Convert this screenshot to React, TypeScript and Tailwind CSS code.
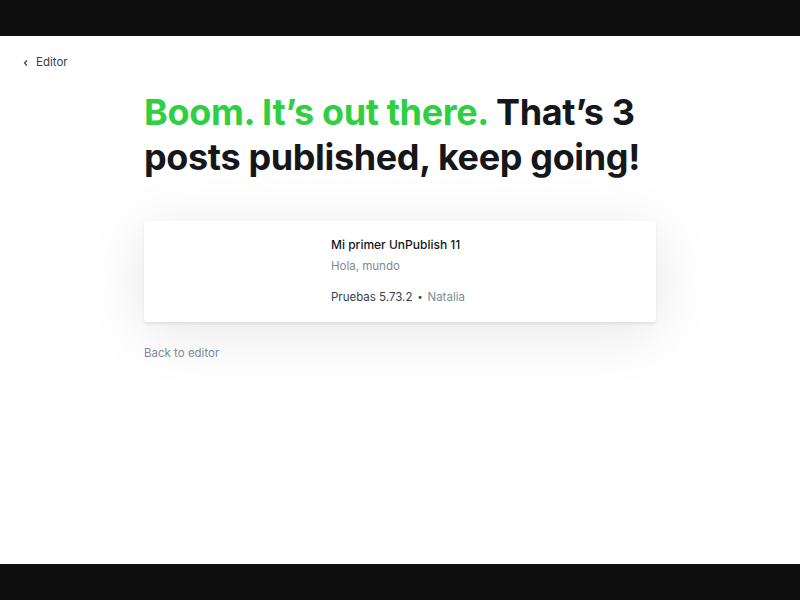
import React from "react";

export default function App() {
  return (
    <div className="w-[800px] h-[600px] bg-[#0f0f0f] flex flex-col" style={{ fontFamily: "Inter, 'Noto Sans', sans-serif" }}>
      <div className="h-[36px] shrink-0" />
      <div className="h-[528px] bg-white relative">
        <div className="absolute left-[22px] top-[18px] flex items-center gap-[6px] text-[11.5px] text-[#394047]">
          <svg width="8" height="8" viewBox="0 0 8 8" fill="none" stroke="#394047" strokeWidth="1.2">
            <path d="M5 1.5 L2.5 4 L5 6.5" />
          </svg>
          <span>Editor</span>
        </div>
        <div className="w-[512px] mx-auto pt-[54px]">
          <h1 className="text-[36px] leading-[45px] font-bold tracking-[-0.01em] text-[#15171a]">
            <span className="text-[#30cf43]">Boom. It’s out there.</span> That’s 3 posts published, keep going!
          </h1>
          <div className="mt-[41px] h-[101px] bg-white rounded-[3px] shadow-[0_2px_3px_rgba(0,0,0,0.08),0_10px_60px_rgba(0,0,0,0.1)] flex">
            <div className="w-[187px] shrink-0" />
            <div className="flex flex-col pt-[16px]">
              <div className="text-[12px] font-medium text-[#15171a] leading-[16px]">Mi primer UnPublish 11</div>
              <div className="text-[11.5px] text-[#7c8b9a] leading-[16px] mt-[5px]">Hola, mundo</div>
              <div className="text-[11.5px] leading-[16px] mt-[15px] flex items-center">
                <span className="text-[#394047]">Pruebas 5.73.2</span>
                <span className="text-[#394047] mx-[5px] text-[9px]">•</span>
                <span className="text-[#7c8b9a]">Natalia</span>
              </div>
            </div>
          </div>
          <div className="mt-[23px] text-[11.5px] text-[#7c8b9a]">Back to editor</div>
        </div>
      </div>
      <div className="h-[36px] shrink-0" />
    </div>
  );
}
